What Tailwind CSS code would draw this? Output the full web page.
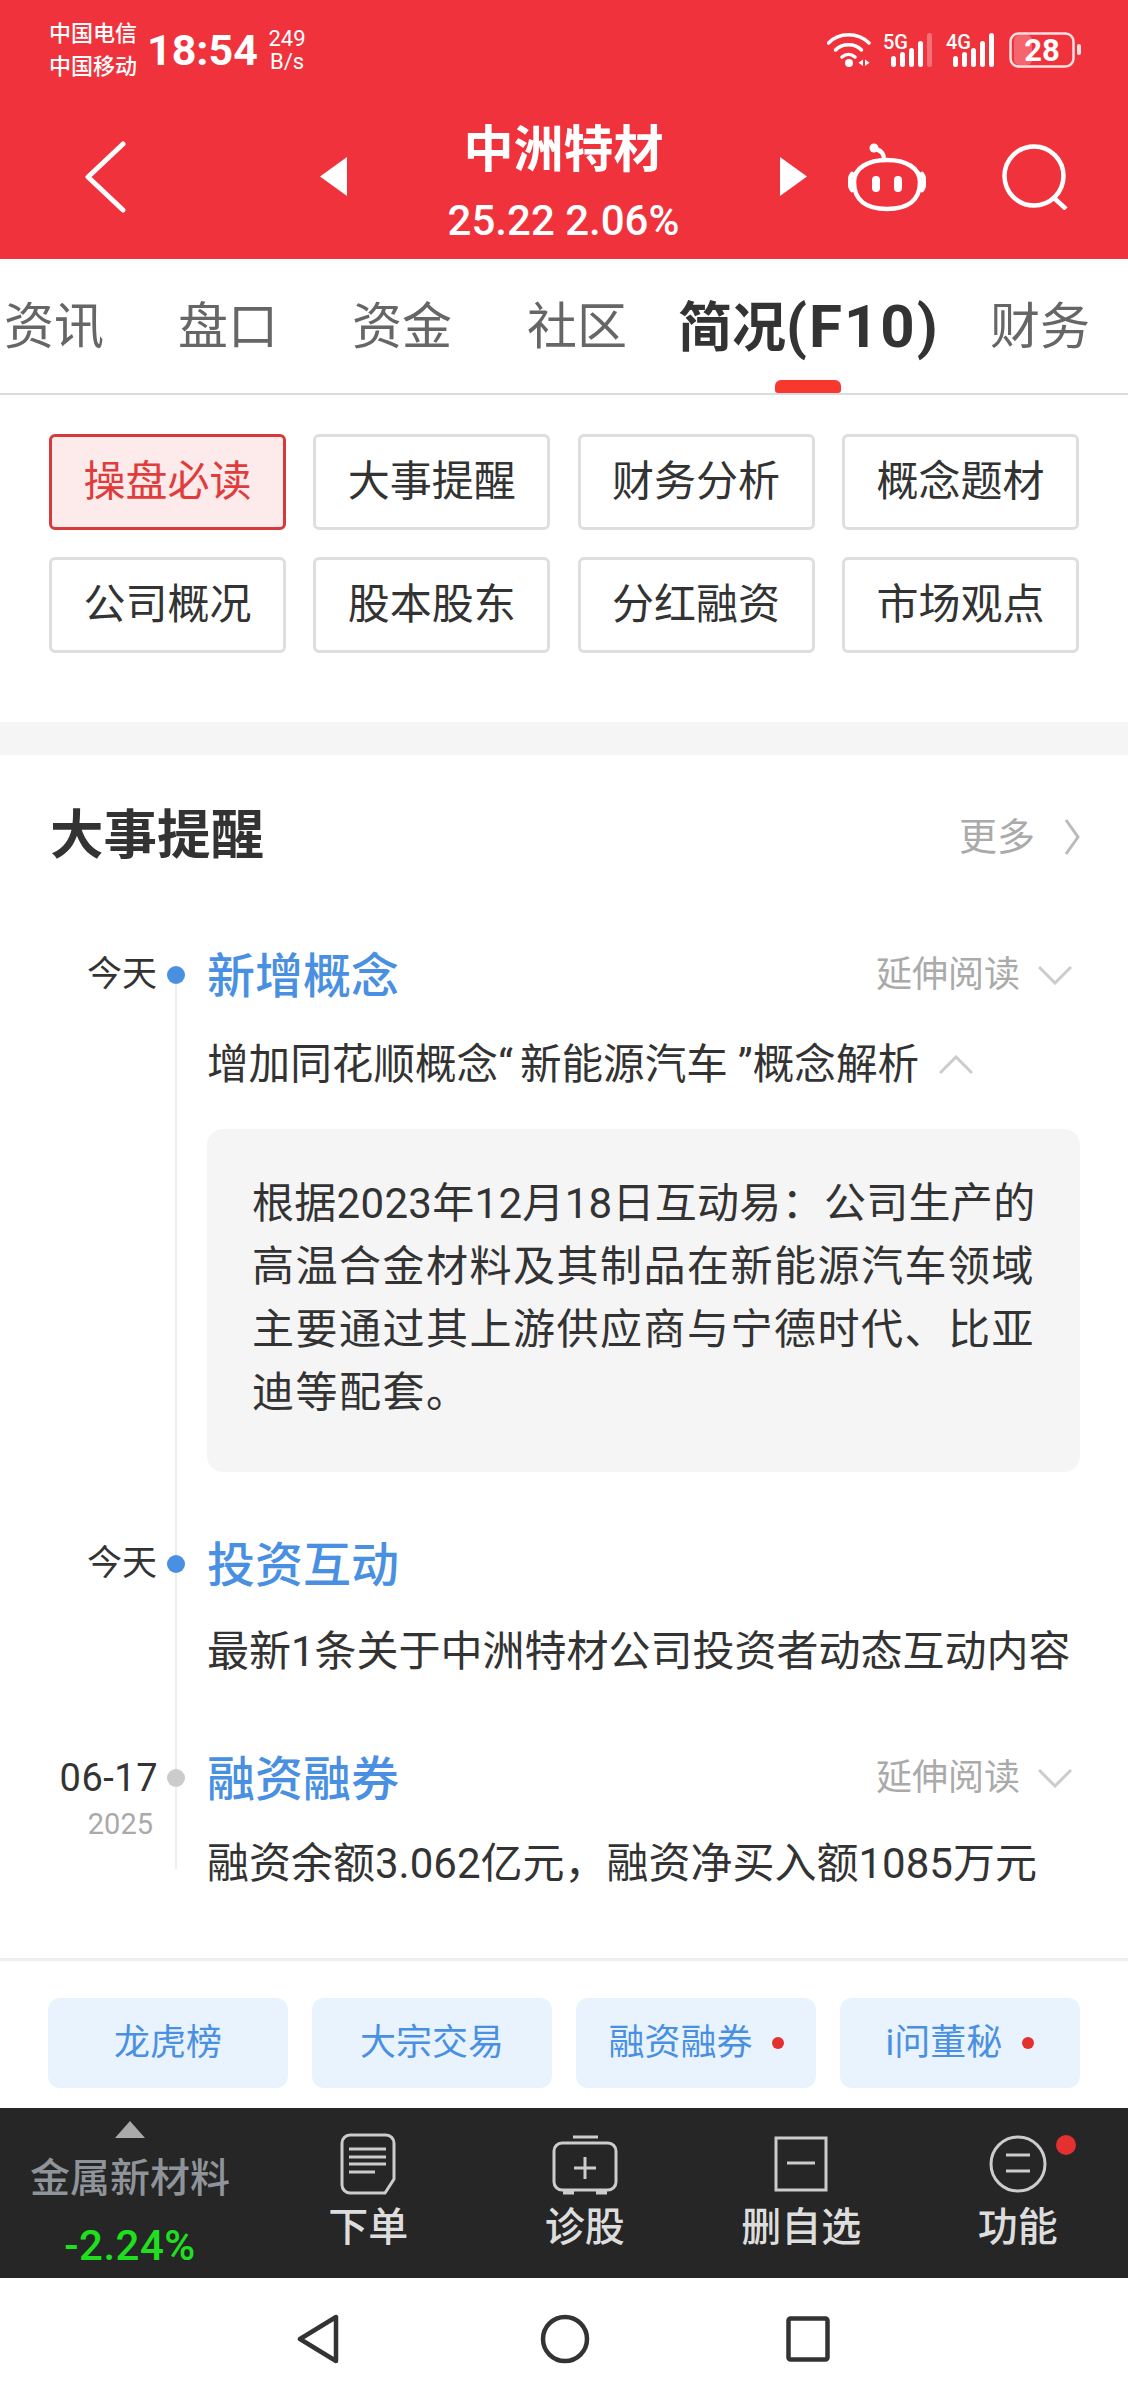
<!DOCTYPE html>
<html lang="zh-CN">
  <head>
    <meta charset="UTF-8" />
    <meta name="viewport" content="width=device-width, initial-scale=1.0" />
    <title>中洲特材</title>
    <script src="https://cdn.jsdelivr.net/npm/@tailwindcss/browser@4"></script>
  </head>
  <body class="bg-white w-[1128px] h-[2400px] overflow-hidden [font-family:Roboto,'Noto_Sans_CJK_SC',sans-serif] text-[#333]">
    <!-- red header -->
    <header class="bg-[#f0323c] text-white h-[259px]">
      <div class="flex items-center h-[100px] pl-[49px] pr-[47px]">
        <div class="text-[22px] leading-[33px] font-medium w-[88px] whitespace-nowrap">
          <div>中国电信</div>
          <div>中国移动</div>
        </div>
        <div class="text-[43px] font-bold ml-[10px] w-[108px] leading-none">18:54</div>
        <div class="text-[22px] leading-[23px] ml-[13px] text-center w-[38px]">
          <div>249</div>
          <div>B/s</div>
        </div>
        <svg class="ml-auto" width="44" height="36" viewBox="0 0 44 36" fill="none" stroke="#fff" stroke-width="3.5" stroke-linecap="round">
          <path d="M1.500 11C12 0 31 0 42 11" />
          <path d="M8.500 18C15 11 28 11 34.500 18" />
          <path d="M15 25C19 21.500 24 21.500 28 25" />
          <circle cx="22" cy="31" r="4" fill="#fff" stroke="none" />
          <path d="M36 27.500V34L31.500 30.750Z M38 27.500V34L42.500 30.750Z" fill="#fff" stroke="none" />
        </svg>
        <svg class="ml-[12px]" width="50" height="46" viewBox="0 -5 50 46">
          <text x="0" y="17" font-size="20" font-weight="500" fill="#fff" font-family="Roboto">5G</text>
          <rect x="8" y="24" width="5" height="11" rx="2.500" fill="#fff" />
          <rect x="17" y="20" width="5" height="15" rx="2.500" fill="#fff" />
          <rect x="26" y="16" width="5" height="19" rx="2.500" fill="#fff" />
          <rect x="35" y="9" width="5" height="26" rx="2.500" fill="#fff" />
          <rect x="44" y="1" width="5" height="34" rx="2.500" fill="#fff" fill-opacity="0.3" />
        </svg>
        <svg class="ml-[13px]" width="50" height="46" viewBox="0 -5 50 46">
          <text x="0" y="17" font-size="20" font-weight="500" fill="#fff" font-family="Roboto">4G</text>
          <rect x="7" y="24" width="5" height="11" rx="2.500" fill="#fff" />
          <rect x="16" y="20" width="5" height="15" rx="2.500" fill="#fff" />
          <rect x="25" y="16" width="5" height="19" rx="2.500" fill="#fff" />
          <rect x="34" y="9" width="5" height="26" rx="2.500" fill="#fff" />
          <rect x="43" y="1" width="5" height="34" rx="2.500" fill="#fff" />
        </svg>
        <svg class="ml-[13px]" width="72" height="36" viewBox="0 0 72 36">
          <rect x="5" y="3" width="18" height="30" rx="5" fill="#fff" fill-opacity="0.25" />
          <rect x="1.500" y="1.500" width="63" height="33" rx="8" fill="none" stroke="#fff" stroke-opacity="0.85" stroke-width="2.500" />
          <rect x="68" y="12" width="4" height="11" rx="2" fill="#fff" fill-opacity="0.85" />
          <text x="33" y="29" text-anchor="middle" font-size="31" font-weight="700" fill="#fff" font-family="Roboto">28</text>
        </svg>
      </div>
      <div class="flex items-center h-[159px]">
        <svg class="ml-[85px] mb-[6px]" width="42" height="72" viewBox="0 0 42 72" fill="none" stroke="#fff" stroke-width="5" stroke-linecap="round" stroke-linejoin="round">
          <path d="M38 3L3 36L38 69" />
        </svg>
        <svg class="ml-[193px] mb-[6px]" width="27" height="39" viewBox="0 0 27 39"><path d="M27 0V39L0 19.500Z" fill="#fff" /></svg>
        <div class="w-[433px] h-full text-center whitespace-nowrap pt-[22px]">
          <div class="text-[50px] font-bold leading-[56px]">中洲特材</div>
          <div class="text-[42px] font-medium leading-[50px] mt-[18px]">25.22 2.06%</div>
        </div>
        <svg class="mb-[6px]" width="27" height="39" viewBox="0 0 27 39"><path d="M0 0V39L27 19.500Z" fill="#fff" /></svg>
        <svg class="ml-[41px] mb-[6px]" width="78" height="70" viewBox="0 0 78 70" fill="none" stroke="#fff" stroke-width="4.500" stroke-linecap="round">
          <circle cx="26" cy="6" r="4.500" fill="#fff" stroke="none" />
          <path d="M28 7C34 9 36 12 36 18" />
          <path d="M6 40C6 26 20 18 39 18C58 18 72 26 72 40C72 58 60 67 39 67C18 67 6 58 6 40Z" />
          <path d="M4 32C1 36 1 44 4 48 M74 32C77 36 77 44 74 48" />
          <rect x="24" y="34" width="8" height="16" rx="4" fill="#fff" stroke="none" />
          <rect x="46" y="34" width="8" height="16" rx="4" fill="#fff" stroke="none" />
        </svg>
        <svg class="ml-[76px] mb-[6px]" width="66" height="66" viewBox="0 0 66 66" fill="none" stroke="#fff" stroke-width="4.500">
          <circle cx="32" cy="32" r="29.500" />
          <path d="M52 54L64 65" />
        </svg>
      </div>
    </header>

    <!-- tabs -->
    <nav class="flex h-[136px] border-b-2 border-[#dcdcdc] text-[50px] leading-[136px] text-[#666] whitespace-nowrap pl-[4px]">
      <span>资讯</span>
      <span class="ml-[74px]">盘口</span>
      <span class="ml-[74px]">资金</span>
      <span class="ml-[75px]">社区</span>
      <span class="relative ml-[51px] w-[260px] text-[54px] font-bold text-[#333]">
        简况<span class="text-[60px] tracking-[2px]">(F10)</span>
        <i class="absolute left-[97px] bottom-0 w-[66px] h-[13px] rounded-t-[6px] rounded-b-[3px] bg-[#f8372f]"></i>
      </span>
      <span class="ml-[52px]">财务</span>
    </nav>

    <!-- quick buttons -->
    <section class="grid grid-cols-[repeat(4,237px)] gap-x-[27.300px] gap-y-[27px] pl-[49px] pt-[39px] pb-[69px] text-[42px] text-center">
      <a class="h-[96px] leading-[90px] rounded-[6px] border-[3px] border-[#d63a3a] bg-[#fdeaea] text-[#e03c3c]">操盘必读</a>
      <a class="h-[96px] leading-[90px] rounded-[6px] border-[3px] border-[#dedede]">大事提醒</a>
      <a class="h-[96px] leading-[90px] rounded-[6px] border-[3px] border-[#dedede]">财务分析</a>
      <a class="h-[96px] leading-[90px] rounded-[6px] border-[3px] border-[#dedede]">概念题材</a>
      <a class="h-[96px] leading-[90px] rounded-[6px] border-[3px] border-[#dedede]">公司概况</a>
      <a class="h-[96px] leading-[90px] rounded-[6px] border-[3px] border-[#dedede]">股本股东</a>
      <a class="h-[96px] leading-[90px] rounded-[6px] border-[3px] border-[#dedede]">分红融资</a>
      <a class="h-[96px] leading-[90px] rounded-[6px] border-[3px] border-[#dedede]">市场观点</a>
    </section>
    <div class="h-[33px] bg-[#f5f5f5]"></div>

    <!-- section title -->
    <div class="flex items-center h-[163px] pl-[50px] pr-[48px]">
      <h2 class="text-[53.500px] font-bold">大事提醒</h2>
      <span class="ml-auto text-[38px] text-[#aaa] pt-[2px]">更多</span>
      <svg class="ml-[29px]" width="16" height="36" viewBox="0 0 16 36" fill="none" stroke="#bbb" stroke-width="3"><path d="M2 1L14 18L2 35" /></svg>
    </div>

    <!-- timeline -->
    <div class="relative mt-[29px] w-[1080px]">
      <div class="absolute left-[175px] top-[28px] w-[2px] h-[894px] bg-[#eee]"></div>

      <div class="grid grid-cols-[157px_50px_873px]">
        <div class="text-[35px] leading-[56px] text-right">今天</div>
        <div class="relative pt-[19px] pl-[10px]"><div class="w-[18px] h-[18px] rounded-full bg-[#4a90e2]"></div></div>
        <div>
          <div class="flex items-center h-[56px]">
            <span class="text-[48px] font-medium text-[#4a90e2] pt-[4px]">新增概念</span>
            <span class="ml-auto text-[36px] text-[#aaa]">延伸阅读</span>
            <svg class="ml-[18px] mr-[8px]" width="34" height="20" viewBox="0 0 34 20" fill="none" stroke="#ccc" stroke-width="3"><path d="M1 2L17 18L33 2" /></svg>
          </div>
          <div class="flex items-center h-[60px] mt-[32px] text-[41.600px] whitespace-nowrap">
            <span class="w-[714px]">增加同花顺概念“<span class="ml-[7px]">新能源汽车</span><span class="ml-[10px]">”</span>概念解析</span>
            <svg class="ml-[18px]" width="34" height="20" viewBox="0 0 34 20" fill="none" stroke="#ccc" stroke-width="3"><path d="M1 18L17 2L33 18" /></svg>
          </div>
          <div class="mt-[34px] h-[343px] rounded-[16px] bg-[#f5f5f5] pt-[43px] pl-[45px] text-[42px] leading-[63px] whitespace-nowrap">
            <div class="tracking-[0.300px]">根据2023年12月18日互动易：公司生产的</div>
            <div class="tracking-[1.500px]">高温合金材料及其制品在新能源汽车领域</div>
            <div class="tracking-[1.500px]">主要通过其上游供应商与宁德时代、比亚</div>
            <div class="tracking-[1.500px]">迪等配套。</div>
          </div>
        </div>
      </div>

      <div class="grid grid-cols-[157px_50px_873px] mt-[64px]">
        <div class="text-[35px] leading-[56px] text-right">今天</div>
        <div class="relative pt-[19px] pl-[10px]"><div class="w-[18px] h-[18px] rounded-full bg-[#4a90e2]"></div></div>
        <div>
          <div class="flex items-center h-[56px]">
            <span class="text-[48px] font-medium text-[#4a90e2] pt-[4px]">投资互动</span>
          </div>
          <div class="text-[42px] leading-[60px] mt-[30px] whitespace-nowrap">最新1条关于中洲特材公司投资者动态互动内容</div>
        </div>
      </div>

      <div class="grid grid-cols-[157px_50px_873px] mt-[68px]">
        <div class="text-right">
          <div class="text-[38px] leading-[56px] tracking-[0.5px] -mr-[1px]">06-17</div>
          <div class="text-[29px] leading-[40px] text-[#aaa] -mt-[2px] pr-[4px]">2025</div>
        </div>
        <div class="relative pt-[19px] pl-[10px]"><div class="w-[18px] h-[18px] rounded-full bg-[#ccc]"></div></div>
        <div>
          <div class="flex items-center h-[56px]">
            <span class="text-[48px] font-medium text-[#4a90e2] pt-[4px]">融资融券</span>
            <span class="ml-auto text-[36px] text-[#aaa]">延伸阅读</span>
            <svg class="ml-[18px] mr-[8px]" width="34" height="20" viewBox="0 0 34 20" fill="none" stroke="#ccc" stroke-width="3"><path d="M1 2L17 18L33 2" /></svg>
          </div>
          <div class="text-[42px] leading-[60px] mt-[28px] whitespace-nowrap">融资余额3.062亿元，融资净买入额1085万元</div>
        </div>
      </div>
    </div>

    <div class="h-[3px] bg-[#eee] mt-[64px]"></div>

    <!-- blue shortcuts -->
    <div class="grid grid-cols-[repeat(4,240px)] gap-x-[24px] pl-[48px] pt-[37px] pb-[20px] text-[36px] text-[#4a90e2]">
      <a class="flex items-center justify-center h-[90px] rounded-[12px] bg-[#e9f3fd]">龙虎榜</a>
      <a class="flex items-center justify-center h-[90px] rounded-[12px] bg-[#e9f3fd]">大宗交易</a>
      <a class="flex items-center justify-center h-[90px] rounded-[12px] bg-[#e9f3fd]">融资融券<i class="w-[12px] h-[12px] rounded-full bg-[#e53030] ml-[19px]"></i></a>
      <a class="flex items-center justify-center h-[90px] rounded-[12px] bg-[#e9f3fd]">i问董秘<i class="w-[12px] h-[12px] rounded-full bg-[#e53030] ml-[20px]"></i></a>
    </div>

    <!-- dark toolbar -->
    <div class="grid grid-cols-[260px_repeat(4,216.500px)] h-[170px] bg-[#262626] text-[#ddd] text-[40px] font-medium">
      <div class="flex flex-col items-center pt-[13px]">
        <svg width="30" height="17" viewBox="0 0 30 17"><path d="M15 0L30 17H0Z" fill="#aaa" /></svg>
        <div class="text-[40px] leading-[50px] mt-[16px] text-[#8e9499]">金属新材料</div>
        <div class="text-[42px] tracking-[0.500px] leading-[50px] mt-[17px] text-[#1fe01f]">-2.24%</div>
      </div>
      <div class="flex flex-col items-center pt-[25px]">
        <svg width="56" height="62" viewBox="0 0 56 62" fill="none" stroke="#ccc" stroke-width="3">
          <path d="M10 2H46A8 8 0 0 1 54 10V46L45 60H10A8 8 0 0 1 2 52V10A8 8 0 0 1 10 2Z" />
          <path d="M9 16H46M9 24H46M9 31H46M9 39H35" />
        </svg>
        <div class="leading-[50px] mt-[8px]">下单</div>
      </div>
      <div class="flex flex-col items-center pt-[25px]">
        <svg width="66" height="62" viewBox="0 0 66 62" fill="none" stroke="#ccc" stroke-width="3">
          <path d="M21 4H46" />
          <rect x="2" y="10" width="62" height="47" rx="8" />
          <path d="M33 24V46M22 35H44" />
          <path d="M11 59H22M44 59H55" stroke-width="5" />
        </svg>
        <div class="leading-[50px] mt-[8px]">诊股</div>
      </div>
      <div class="flex flex-col items-center pt-[25px]">
        <svg width="56" height="62" viewBox="0 0 56 62" fill="none" stroke="#ccc" stroke-width="3">
          <rect x="3" y="5" width="50" height="52" />
          <path d="M14 30H42" />
        </svg>
        <div class="leading-[50px] mt-[8px]">删自选</div>
      </div>
      <div class="relative flex flex-col items-center pt-[25px]">
        <svg width="58" height="62" viewBox="0 0 58 62" fill="none" stroke="#ccc" stroke-width="3">
          <circle cx="29" cy="31" r="27" />
          <path d="M17 22H41M17 38H41" />
        </svg>
        <div class="leading-[50px] mt-[8px]">功能</div>
        <i class="absolute left-[146px] top-[27px] w-[20px] h-[20px] rounded-full bg-[#e53030]"></i>
      </div>
    </div>

    <!-- android nav -->
    <div class="flex items-center h-[122px] pl-[297px]">
      <svg width="42" height="50" viewBox="0 0 42 50" fill="none" stroke="#333" stroke-width="4.500" stroke-linejoin="round"><path d="M39 3V47L3 25Z" /></svg>
      <svg class="ml-[201px]" width="50" height="50" viewBox="0 0 50 50" fill="none" stroke="#333" stroke-width="4.500"><circle cx="25" cy="25" r="22" /></svg>
      <svg class="ml-[196px]" width="44" height="46" viewBox="0 0 44 46" fill="none" stroke="#333" stroke-width="4.500"><rect x="2.500" y="2.500" width="39" height="41" rx="2" /></svg>
    </div>
  </body>
</html>
